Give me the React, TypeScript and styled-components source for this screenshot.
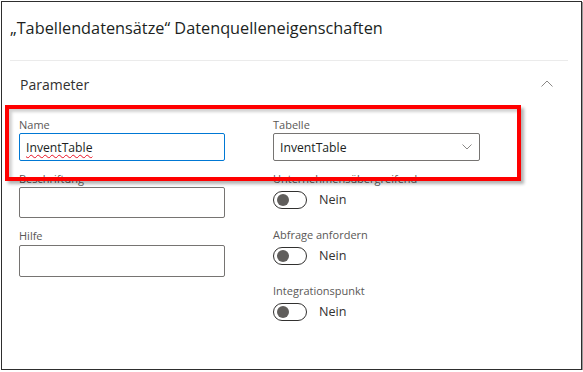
import React from 'react'
import styled, { createGlobalStyle } from 'styled-components'

const GlobalStyle = createGlobalStyle`
  body {
    margin: 0;
    background: #ffffff;
    font-family: "Open Sans", "Noto Sans", sans-serif;
    color: #323130;
  }
`

const App = () => {
  return (
    <>
      <GlobalStyle />
      <Frame>
        <Header>
          <Title>„Tabellendatensätze“ Datenquelleneigenschaften</Title>
        </Header>

        <Section>
          <SectionHead>
            <SectionTitle>Parameter</SectionTitle>
            <ChevronUp viewBox="0 0 12 7">
              <path d="M0.5 6.5 L6 1 L11.5 6.5" />
            </ChevronUp>
          </SectionHead>

          <Body>
            <Column>
              <Field>
                <Label>Name</Label>
                <TextBox focused>
                  <Squiggle>InventTable</Squiggle>
                </TextBox>
              </Field>
              <Field>
                <Label>Beschriftung</Label>
                <TextBox />
              </Field>
              <Field>
                <Label>Hilfe</Label>
                <TextBox tall />
              </Field>
            </Column>

            <Column>
              <Field>
                <Label>Tabelle</Label>
                <Select>
                  <span>InventTable</span>
                  <ChevronDown viewBox="0 0 10 6">
                    <path d="M0.5 0.5 L5 5 L9.5 0.5" />
                  </ChevronDown>
                </Select>
              </Field>
              <Field>
                <Label>Unternehmensübergreifend</Label>
                <ToggleRow>
                  <Toggle><Knob /></Toggle>
                  <ToggleText>Nein</ToggleText>
                </ToggleRow>
              </Field>
              <Field>
                <Label>Abfrage anfordern</Label>
                <ToggleRow>
                  <Toggle><Knob /></Toggle>
                  <ToggleText>Nein</ToggleText>
                </ToggleRow>
              </Field>
              <Field>
                <Label>Integrationspunkt</Label>
                <ToggleRow>
                  <Toggle><Knob /></Toggle>
                  <ToggleText>Nein</ToggleText>
                </ToggleRow>
              </Field>
            </Column>
          </Body>
        </Section>

        <Highlight />
      </Frame>
    </>
  )
}

export default App

const Frame = styled.div`
  position: relative;
  margin: 1px 0 0 1px;
  width: 581px;
  height: 369px;
  box-sizing: border-box;
  border: 1px solid #2e2e2e;
  box-shadow: 1px 1px 0 #9a9a9a;
  background: #ffffff;
  overflow: hidden;
`

const Header = styled.header`
  margin: 0 13px 0 8px;
  height: 59px;
  box-sizing: border-box;
  padding-top: 14px;
  border-bottom: 1px solid #ebebeb;
`

const Title = styled.div`
  font-size: 16.3px;
  line-height: 24px;
  color: #201f1e;
  white-space: nowrap;
`

const Section = styled.section`
  margin: 0 13px 0 8px;
`

const SectionHead = styled.div`
  height: 44px;
  box-sizing: border-box;
  display: flex;
  align-items: center;
  justify-content: space-between;
  padding: 3px 15px 0 10px;
`

const SectionTitle = styled.div`
  font-size: 14px;
  line-height: 20px;
  color: #323130;
`

const ChevronUp = styled.svg`
  width: 12px;
  height: 7px;
  margin-top: -3px;
  fill: none;
  stroke: #8a8886;
  stroke-width: 1;
`

const Body = styled.div`
  display: flex;
  gap: 47px;
  padding: 12px 0 0 9px;
`

const Column = styled.div`
  display: flex;
  flex-direction: column;
  gap: 10px;
  width: 207px;
`

const Field = styled.div`
  display: flex;
  flex-direction: column;
`

const Label = styled.div`
  font-size: 11px;
  line-height: 16px;
  height: 16px;
  color: #5a5856;
  white-space: nowrap;
`

const TextBox = styled.div<{ focused?: boolean; tall?: boolean }>`
  box-sizing: border-box;
  width: 206px;
  height: ${p => (p.focused ? 28 : p.tall ? 32 : 31)}px;
  margin-top: ${p => (p.tall ? 1 : 0)}px;
  border: 1px solid ${p => (p.focused ? '#0078d4' : '#767472')};
  border-radius: 2px;
  padding: 0 6px;
  display: flex;
  align-items: center;
  font-size: 12.2px;
  color: #201f1e;
`

const Squiggle = styled.span`
  text-decoration: underline wavy #e81123;
  text-decoration-thickness: 1px;
  text-underline-offset: 2px;
`

const Select = styled.div`
  box-sizing: border-box;
  width: 207px;
  height: 28px;
  border: 1px solid #767472;
  border-radius: 2px;
  padding: 0 7px 0 6px;
  display: flex;
  align-items: center;
  justify-content: space-between;
  font-size: 12.2px;
  color: #201f1e;
`

const ChevronDown = styled.svg`
  width: 10px;
  height: 6px;
  fill: none;
  stroke: #8a8886;
  stroke-width: 1;
`

const ToggleRow = styled.div`
  height: 30px;
  display: flex;
  align-items: flex-start;
  gap: 12px;
  padding-top: 4px;
  box-sizing: border-box;
`

const Toggle = styled.div`
  box-sizing: border-box;
  width: 34px;
  height: 18px;
  border: 1px solid #323130;
  border-radius: 9px;
  display: flex;
  align-items: center;
  padding-left: 3px;
`

const Knob = styled.div`
  width: 12px;
  height: 12px;
  border-radius: 50%;
  background: #605e5c;
`

const ToggleText = styled.div`
  font-size: 12.6px;
  line-height: 18px;
  color: #323130;
`

const Highlight = styled.div`
  position: absolute;
  left: 3px;
  top: 103px;
  width: 516px;
  height: 76px;
  box-sizing: border-box;
  border: 4px solid #ff0000;
  box-shadow: 3px 3px 3px rgba(0, 0, 0, 0.3), inset 3px 3px 3px rgba(0, 0, 0, 0.18);
  pointer-events: none;
`
